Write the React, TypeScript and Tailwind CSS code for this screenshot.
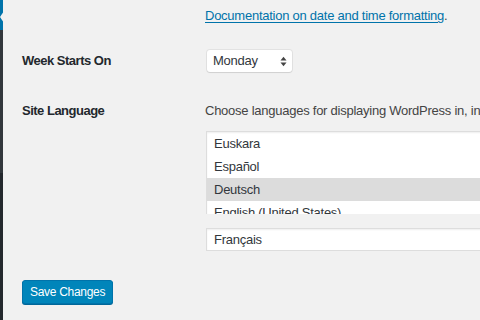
import React from "react";

const languages = ["Euskara", "Español", "Deutsch", "English (United States)"];

const SelectArrows: React.FC = () => (
    <svg width="7" height="11" viewBox="0 0 7 11" className="text-[#444]">
        <path d="M0.5 4.5 L3.5 0.8 L6.5 4.5 Z" fill="currentColor" />
        <path d="M0.5 6.5 L3.5 10.2 L6.5 6.5 Z" fill="currentColor" />
    </svg>
);

export default function App() {
    return (
        <div className="flex w-[480px] h-[320px] overflow-hidden bg-[#f1f1f1] font-['Liberation_Sans',Arial,sans-serif] text-[13px] tracking-[-0.25px] text-[#444]">
            {/* admin menu edge */}
            <div className="relative w-[3px] shrink-0 flex flex-col bg-[#23282d]">
                <div className="h-[30px] bg-[#0073aa]" />
                <div className="absolute left-0 top-[11px] w-0 h-0 border-y-[6px] border-y-transparent border-r-[4px] border-r-[#f1f1f1]" />
                <div className="h-[143px] bg-[#32373c]" />
            </div>

            <div className="flex-1 pl-[19px] pt-[8px] overflow-hidden">
                <div className="flex">
                    <div className="w-[183px] shrink-0" />
                    <p className="leading-[15px]">
                        <a href="#" className="text-[#0073aa] underline underline-offset-2">
                            Documentation on date and time formatting
                        </a>
                        .
                    </p>
                </div>

                <div className="flex items-center mt-[27px]">
                    <div className="w-[183px] shrink-0 font-bold tracking-[-0.5px] text-[#23282d]">
                        Week Starts On
                    </div>
                    <div className="ml-[2px] w-[85px] h-[22px] bg-white rounded-[3px] shadow-[0_0_0_1px_rgba(0,0,0,0.06),0_1px_1px_rgba(0,0,0,0.08)] flex items-center justify-between pl-[6px] pr-[5px] text-[#32373c]">
                        <span>Monday</span>
                        <SelectArrows />
                    </div>
                </div>

                <div className="flex mt-[31px]">
                    <div className="w-[183px] shrink-0 font-bold tracking-[-0.5px] text-[#23282d] leading-[15px]">
                        Site Language
                    </div>
                    <div className="flex-1 min-w-0">
                        <p className="leading-[15px] whitespace-nowrap text-[#444]">
                            Choose languages for displaying WordPress in, in order of preference.
                        </p>
                        <div className="mt-[13px] ml-[1px] w-[320px] h-[83px] overflow-hidden bg-white border-t border-l border-[#ddd] shadow-[inset_0_1px_2px_rgba(0,0,0,0.07)]">
                            {languages.map((lang) => (
                                <div
                                    key={lang}
                                    className={`h-[23px] flex items-center pl-[7px] text-[#32373c] ${
                                        lang === "Deutsch" ? "bg-[#dcdcdc]" : ""
                                    }`}
                                >
                                    {lang}
                                </div>
                            ))}
                        </div>
                        <div className="mt-[14px] ml-[1px] w-[320px] h-[23px] bg-white border border-r-0 border-[#ddd] flex items-center pl-[7px] text-[#32373c] shadow-[inset_0_1px_2px_rgba(0,0,0,0.07)]">
                            Français
                        </div>
                    </div>
                </div>

                <div className="mt-[29px]">
                    <button className="h-[24px] px-[7px] bg-[#0085ba] border border-[#0073aa] rounded-[3px] text-white text-[12px] tracking-[-0.3px] leading-none shadow-[0_1px_0_#006799]">
                        Save Changes
                    </button>
                </div>
            </div>
        </div>
    );
}
